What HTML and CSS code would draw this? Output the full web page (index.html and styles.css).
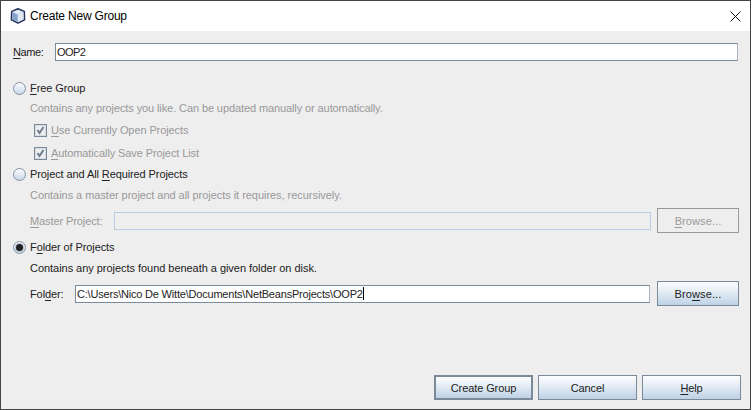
FILE: index.html
```html
<!DOCTYPE html>
<html lang="en">

<head>
  <meta charset="UTF-8">
  <meta name="viewport" content="width=device-width, initial-scale=1.0">
  <title>Create New Group</title>
  <link rel="stylesheet" href="styles.css">
</head>

<body>
  <div class="window">
    <div class="titlebar">
      <svg class="app-icon" width="16" height="16" viewBox="0 0 16 16">
        <path d="M8 .8 14.3 3.4 14.6 11.8 8 15.2 1.4 11.8 1.7 3.4Z" fill="#c3d3e8" stroke="#27345c" stroke-width="1.5" stroke-linejoin="round"/>
        <path d="M8 2 13 4 8 6.2 3 4Z" fill="#e4ebf4"/>
        <path d="M8 6.5V14L13.4 11.2 13.4 4.5Z" fill="#dfe8f2"/>
        <path d="M2.6 4.5 7.6 6.5V14L2.6 11.3Z" fill="#86a2cc"/>
      </svg>
      <span class="title">Create New Group</span>
      <svg class="close" width="11" height="11" viewBox="0 0 11 11">
        <path d="M.5 .5 10.5 10.5M10.5 .5 .5 10.5" stroke="#111" stroke-width="1" fill="none"/>
      </svg>
    </div>

    <div class="content">
      <div class="name-row">
        <label class="name-label"><u>N</u>ame:</label>
        <div class="field field-name">OOP2</div>
      </div>

      <div class="option option-first"><span class="radio"></span><span><u>F</u>ree Group</span></div>
      <div class="hint muted">Contains any projects you like. Can be updated manually or automatically.</div>
      <div class="check check-first muted"><span class="box"><svg width="11" height="11" viewBox="0 0 11 11"><path d="M2.5 5 4.5 8 8.5 2" fill="none" stroke="#6d7c8f" stroke-width="2"/></svg></span><span><u>U</u>se Currently Open Projects</span></div>
      <div class="check check-second muted"><span class="box"><svg width="11" height="11" viewBox="0 0 11 11"><path d="M2.5 5 4.5 8 8.5 2" fill="none" stroke="#6d7c8f" stroke-width="2"/></svg></span><span><u>A</u>utomatically Save Project List</span></div>

      <div class="option option-second"><span class="radio"></span><span>Project and All <u>R</u>equired Projects</span></div>
      <div class="hint hint-low muted">Contains a master project and all projects it requires, recursively.</div>
      <div class="path-row">
        <label class="path-label master-label muted"><u>M</u>aster Project:</label>
        <div class="field field-off"></div>
        <div class="btn btn-off"><span><u>B</u>rowse...</span></div>
      </div>

      <div class="option option-third"><span class="radio radio-on"></span><span>F<u>o</u>lder of Projects</span></div>
      <div class="hint hint-low">Contains any projects found beneath a given folder on disk.</div>
      <div class="path-row">
        <label class="path-label folder-label">Fol<u>d</u>er:</label>
        <div class="field field-folder">C:\Users\Nico De Witte\Documents\NetBeansProjects\OOP2<span class="caret"></span></div>
        <div class="btn btn-browse"><span>Bro<u>w</u>se...</span></div>
      </div>

      <div class="footer">
        <div class="btn btn-main btn-default">Create Group</div>
        <div class="btn btn-main">Cancel</div>
        <div class="btn btn-main"><span><u>H</u>elp</span></div>
      </div>
    </div>
  </div>
</body>

</html>
```

FILE: styles.css
```css
html, body {
  margin: 0;
  padding: 0;
  height: 100%;
  overflow: hidden;
  background: #fff;
}

body {
  font-family: "Liberation Sans", Arial, sans-serif;
  font-size: 11px;
  letter-spacing: -0.1px;
  color: #222;
}

u {
  text-underline-offset: 2px;
}

.window {
  box-sizing: border-box;
  width: 751px;
  height: 410px;
  border: 1px solid #444;
  display: flex;
  flex-direction: column;
  background: #eeeeee;
}

.titlebar {
  height: 30px;
  flex: none;
  background: #fff;
  display: flex;
  align-items: center;
  padding: 0 9px 0 9px;
  color: #000;
  font-size: 12px;
  letter-spacing: -0.2px;
}

.app-icon {
  margin-right: 4px;
}

.title {
  flex: 1;
}

.content {
  flex: 1;
  display: flex;
  flex-direction: column;
  padding: 12px 9px 9px 12px;
}

.name-row {
  display: flex;
  align-items: center;
  height: 18px;
  margin-right: 3px;
}

.name-label {
  width: 42px;
  letter-spacing: -0.4px;
}

.field {
  box-sizing: border-box;
  flex: 1;
  height: 18px;
  background: #fff;
  border: 1px solid #7b8a99;
  border-right-color: #a9b4bf;
  padding-left: 1px;
  line-height: 16px;
  white-space: nowrap;
  letter-spacing: -0.2px;
}

.field-name {
  letter-spacing: -0.6px;
}

.option {
  display: flex;
  align-items: center;
  height: 18px;
}

.option-first { margin-top: 18px; }
.option-second { margin-top: 3px; }
.option-third { margin-top: 5px; }

.radio {
  box-sizing: border-box;
  width: 13px;
  height: 13px;
  margin-right: 4px;
  border-radius: 50%;
  border: 1px solid #8493a3;
  background: linear-gradient(#fbfcfe, #c9d8ea);
  position: relative;
}

.radio-on::after {
  content: "";
  position: absolute;
  left: 2px;
  top: 2px;
  width: 7px;
  height: 7px;
  border-radius: 50%;
  background: #222;
  box-shadow: 0 0 0 1px #b5bfca;
}

.hint {
  height: 18px;
  line-height: 18px;
  margin: 2px 0 0 17px;
}

.hint-low {
  margin-top: 3px;
  letter-spacing: -0.04px;
}

.muted {
  color: #999;
}

.check {
  display: flex;
  align-items: center;
  height: 18px;
  margin-left: 21px;
}

.check-first { margin-top: 4px; }
.check-second { margin-top: 5px; }

.box {
  box-sizing: border-box;
  width: 13px;
  height: 13px;
  margin-right: 4px;
  border: 1px solid #7b8a99;
  box-shadow: inset 0 0 0 1px #d5dbe2;
  background: #eee;
  display: flex;
  align-items: center;
  justify-content: center;
}

.path-row {
  display: flex;
  align-items: center;
  height: 25px;
  margin: 4px 2px 0 17px;
}

.path-label {
  flex: none;
  white-space: nowrap;
}

.master-label { width: 84px; }
.folder-label { width: 45px; }

.field-off {
  background: #eee;
  border: 1px solid #b8cfe5;
  margin-right: 6px;
}

.field-folder {
  margin-right: 7px;
}

.caret {
  display: inline-block;
  width: 1px;
  height: 13px;
  background: #000;
  vertical-align: -2px;
}

.btn {
  box-sizing: border-box;
  flex: none;
  width: 82px;
  height: 25px;
  display: flex;
  align-items: center;
  justify-content: center;
  border: 1px solid #7b8a99;
  background: linear-gradient(#fbfcfe 0%, #f0f4f9 25%, #bed2e6 100%);
  color: #222;
  letter-spacing: 0.1px;
}

.btn-off {
  background: #eee;
  border-color: #999;
  color: #999;
}

.footer {
  margin-top: auto;
  display: flex;
  justify-content: flex-end;
  gap: 5px;
}

.btn-main {
  width: 99px;
  letter-spacing: -0.1px;
}

.btn-default {
  border: 2px solid #7b8a99;
}

.close {
  flex: none;
}
```
